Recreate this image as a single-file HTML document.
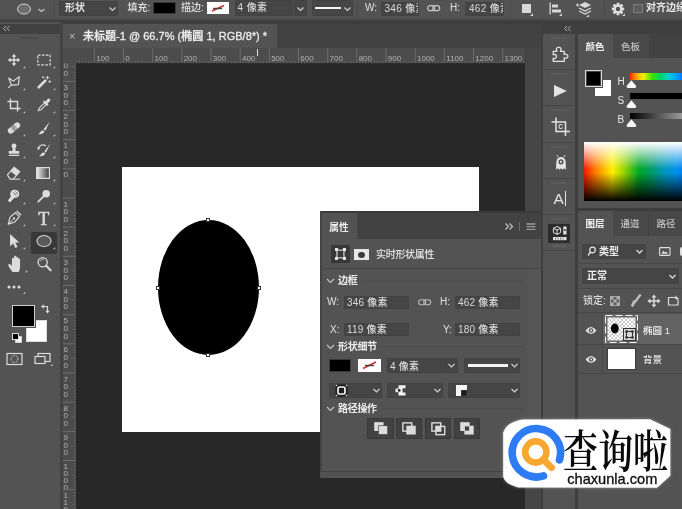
<!DOCTYPE html>
<html><head><meta charset="utf-8"><title>PS</title>
<style>
html,body{margin:0;padding:0;}
body{width:682px;height:509px;overflow:hidden;background:#535353;position:relative;font-family:"Liberation Sans","Noto Sans CJK SC",sans-serif;font-size:10px;color:#dcdcdc;}
.a{position:absolute;}
.t{position:absolute;white-space:nowrap;line-height:1;font-weight:500;}
.f{position:absolute;background:#454545;border:1px solid #424242;box-sizing:border-box;border-radius:1px;}
svg{position:absolute;overflow:visible;}
#w{position:absolute;left:0;top:0;width:682px;height:509px;overflow:hidden;background:#535353;filter:blur(0.6px);}
</style></head><body>
<div id="w">

<div class="a" style="left:62px;top:22px;width:480px;height:487px;background:#282828"></div>
<div class="a" style="left:62px;top:22px;width:480px;height:26px;background:#424242"></div>
<div class="a" style="left:63px;top:24px;width:214px;height:24px;background:#535353"></div>
<div class="t" style="left:69px;top:30.7px;font-size:11px;color:#bdbdbd">×</div>
<div class="t" style="left:83px;top:30.7px;font-size:11px;color:#eeeeee;font-weight:500;-webkit-text-stroke:0.3px #eee;letter-spacing:0.02px">未标题-1 @ 66.7% (椭圆 1, RGB/8*) *</div>
<div class="a" style="left:62.5px;top:48px;width:462.5px;height:15.3px;background:#4c4c4c"></div>
<div class="a" style="left:62.5px;top:48px;width:13.3px;height:461px;background:#4c4c4c"></div>
<svg class="a" style="left:0;top:0" width="682" height="509" viewBox="0 0 682 509"><defs><clipPath id="vr"><rect x="61" y="63.5" width="15" height="446"/></clipPath></defs><rect x="93.83" y="48" width="1" height="15" fill="#6c6c6c"/><text x="96.13" y="60.6" font-size="8" fill="#b2b2b2" font-family="Liberation Sans, sans-serif">100</text><rect x="123.00" y="48" width="1" height="15" fill="#6c6c6c"/><text x="125.30" y="60.6" font-size="8" fill="#b2b2b2" font-family="Liberation Sans, sans-serif">0</text><rect x="152.17" y="48" width="1" height="15" fill="#6c6c6c"/><text x="154.47" y="60.6" font-size="8" fill="#b2b2b2" font-family="Liberation Sans, sans-serif">100</text><rect x="181.34" y="48" width="1" height="15" fill="#6c6c6c"/><text x="183.64" y="60.6" font-size="8" fill="#b2b2b2" font-family="Liberation Sans, sans-serif">200</text><rect x="210.51" y="48" width="1" height="15" fill="#6c6c6c"/><text x="212.81" y="60.6" font-size="8" fill="#b2b2b2" font-family="Liberation Sans, sans-serif">300</text><rect x="239.68" y="48" width="1" height="15" fill="#6c6c6c"/><text x="241.98" y="60.6" font-size="8" fill="#b2b2b2" font-family="Liberation Sans, sans-serif">400</text><rect x="268.85" y="48" width="1" height="15" fill="#6c6c6c"/><text x="271.15" y="60.6" font-size="8" fill="#b2b2b2" font-family="Liberation Sans, sans-serif">500</text><rect x="298.02" y="48" width="1" height="15" fill="#6c6c6c"/><text x="300.32" y="60.6" font-size="8" fill="#b2b2b2" font-family="Liberation Sans, sans-serif">600</text><rect x="327.19" y="48" width="1" height="15" fill="#6c6c6c"/><text x="329.49" y="60.6" font-size="8" fill="#b2b2b2" font-family="Liberation Sans, sans-serif">700</text><rect x="356.36" y="48" width="1" height="15" fill="#6c6c6c"/><text x="358.66" y="60.6" font-size="8" fill="#b2b2b2" font-family="Liberation Sans, sans-serif">800</text><rect x="385.53" y="48" width="1" height="15" fill="#6c6c6c"/><text x="387.83" y="60.6" font-size="8" fill="#b2b2b2" font-family="Liberation Sans, sans-serif">900</text><rect x="414.70" y="48" width="1" height="15" fill="#6c6c6c"/><text x="417.00" y="60.6" font-size="8" fill="#b2b2b2" font-family="Liberation Sans, sans-serif">1000</text><rect x="443.87" y="48" width="1" height="15" fill="#6c6c6c"/><text x="446.17" y="60.6" font-size="8" fill="#b2b2b2" font-family="Liberation Sans, sans-serif">1100</text><rect x="473.04" y="48" width="1" height="15" fill="#6c6c6c"/><text x="475.34" y="60.6" font-size="8" fill="#b2b2b2" font-family="Liberation Sans, sans-serif">1200</text><rect x="502.21" y="48" width="1" height="15" fill="#6c6c6c"/><text x="504.51" y="60.6" font-size="8" fill="#b2b2b2" font-family="Liberation Sans, sans-serif">1300</text><rect x="76.33" y="61.3" width="1" height="2" fill="#626262"/><rect x="79.25" y="59.3" width="1" height="4" fill="#626262"/><rect x="82.16" y="61.3" width="1" height="2" fill="#626262"/><rect x="85.08" y="61.3" width="1" height="2" fill="#626262"/><rect x="88.00" y="61.3" width="1" height="2" fill="#626262"/><rect x="90.91" y="61.3" width="1" height="2" fill="#626262"/><rect x="96.75" y="61.3" width="1" height="2" fill="#626262"/><rect x="99.66" y="61.3" width="1" height="2" fill="#626262"/><rect x="102.58" y="61.3" width="1" height="2" fill="#626262"/><rect x="105.50" y="61.3" width="1" height="2" fill="#626262"/><rect x="108.41" y="59.3" width="1" height="4" fill="#626262"/><rect x="111.33" y="61.3" width="1" height="2" fill="#626262"/><rect x="114.25" y="61.3" width="1" height="2" fill="#626262"/><rect x="117.17" y="61.3" width="1" height="2" fill="#626262"/><rect x="120.08" y="61.3" width="1" height="2" fill="#626262"/><rect x="125.92" y="61.3" width="1" height="2" fill="#626262"/><rect x="128.83" y="61.3" width="1" height="2" fill="#626262"/><rect x="131.75" y="61.3" width="1" height="2" fill="#626262"/><rect x="134.67" y="61.3" width="1" height="2" fill="#626262"/><rect x="137.59" y="59.3" width="1" height="4" fill="#626262"/><rect x="140.50" y="61.3" width="1" height="2" fill="#626262"/><rect x="143.42" y="61.3" width="1" height="2" fill="#626262"/><rect x="146.34" y="61.3" width="1" height="2" fill="#626262"/><rect x="149.25" y="61.3" width="1" height="2" fill="#626262"/><rect x="155.09" y="61.3" width="1" height="2" fill="#626262"/><rect x="158.00" y="61.3" width="1" height="2" fill="#626262"/><rect x="160.92" y="61.3" width="1" height="2" fill="#626262"/><rect x="163.84" y="61.3" width="1" height="2" fill="#626262"/><rect x="166.75" y="59.3" width="1" height="4" fill="#626262"/><rect x="169.67" y="61.3" width="1" height="2" fill="#626262"/><rect x="172.59" y="61.3" width="1" height="2" fill="#626262"/><rect x="175.51" y="61.3" width="1" height="2" fill="#626262"/><rect x="178.42" y="61.3" width="1" height="2" fill="#626262"/><rect x="184.26" y="61.3" width="1" height="2" fill="#626262"/><rect x="187.17" y="61.3" width="1" height="2" fill="#626262"/><rect x="190.09" y="61.3" width="1" height="2" fill="#626262"/><rect x="193.01" y="61.3" width="1" height="2" fill="#626262"/><rect x="195.93" y="59.3" width="1" height="4" fill="#626262"/><rect x="198.84" y="61.3" width="1" height="2" fill="#626262"/><rect x="201.76" y="61.3" width="1" height="2" fill="#626262"/><rect x="204.68" y="61.3" width="1" height="2" fill="#626262"/><rect x="207.59" y="61.3" width="1" height="2" fill="#626262"/><rect x="213.43" y="61.3" width="1" height="2" fill="#626262"/><rect x="216.34" y="61.3" width="1" height="2" fill="#626262"/><rect x="219.26" y="61.3" width="1" height="2" fill="#626262"/><rect x="222.18" y="61.3" width="1" height="2" fill="#626262"/><rect x="225.09" y="59.3" width="1" height="4" fill="#626262"/><rect x="228.01" y="61.3" width="1" height="2" fill="#626262"/><rect x="230.93" y="61.3" width="1" height="2" fill="#626262"/><rect x="233.85" y="61.3" width="1" height="2" fill="#626262"/><rect x="236.76" y="61.3" width="1" height="2" fill="#626262"/><rect x="242.60" y="61.3" width="1" height="2" fill="#626262"/><rect x="245.51" y="61.3" width="1" height="2" fill="#626262"/><rect x="248.43" y="61.3" width="1" height="2" fill="#626262"/><rect x="251.35" y="61.3" width="1" height="2" fill="#626262"/><rect x="254.27" y="59.3" width="1" height="4" fill="#626262"/><rect x="257.18" y="61.3" width="1" height="2" fill="#626262"/><rect x="260.10" y="61.3" width="1" height="2" fill="#626262"/><rect x="263.02" y="61.3" width="1" height="2" fill="#626262"/><rect x="265.93" y="61.3" width="1" height="2" fill="#626262"/><rect x="271.77" y="61.3" width="1" height="2" fill="#626262"/><rect x="274.68" y="61.3" width="1" height="2" fill="#626262"/><rect x="277.60" y="61.3" width="1" height="2" fill="#626262"/><rect x="280.52" y="61.3" width="1" height="2" fill="#626262"/><rect x="283.44" y="59.3" width="1" height="4" fill="#626262"/><rect x="286.35" y="61.3" width="1" height="2" fill="#626262"/><rect x="289.27" y="61.3" width="1" height="2" fill="#626262"/><rect x="292.19" y="61.3" width="1" height="2" fill="#626262"/><rect x="295.10" y="61.3" width="1" height="2" fill="#626262"/><rect x="300.94" y="61.3" width="1" height="2" fill="#626262"/><rect x="303.85" y="61.3" width="1" height="2" fill="#626262"/><rect x="306.77" y="61.3" width="1" height="2" fill="#626262"/><rect x="309.69" y="61.3" width="1" height="2" fill="#626262"/><rect x="312.61" y="59.3" width="1" height="4" fill="#626262"/><rect x="315.52" y="61.3" width="1" height="2" fill="#626262"/><rect x="318.44" y="61.3" width="1" height="2" fill="#626262"/><rect x="321.36" y="61.3" width="1" height="2" fill="#626262"/><rect x="324.27" y="61.3" width="1" height="2" fill="#626262"/><rect x="330.11" y="61.3" width="1" height="2" fill="#626262"/><rect x="333.02" y="61.3" width="1" height="2" fill="#626262"/><rect x="335.94" y="61.3" width="1" height="2" fill="#626262"/><rect x="338.86" y="61.3" width="1" height="2" fill="#626262"/><rect x="341.77" y="59.3" width="1" height="4" fill="#626262"/><rect x="344.69" y="61.3" width="1" height="2" fill="#626262"/><rect x="347.61" y="61.3" width="1" height="2" fill="#626262"/><rect x="350.53" y="61.3" width="1" height="2" fill="#626262"/><rect x="353.44" y="61.3" width="1" height="2" fill="#626262"/><rect x="359.28" y="61.3" width="1" height="2" fill="#626262"/><rect x="362.19" y="61.3" width="1" height="2" fill="#626262"/><rect x="365.11" y="61.3" width="1" height="2" fill="#626262"/><rect x="368.03" y="61.3" width="1" height="2" fill="#626262"/><rect x="370.95" y="59.3" width="1" height="4" fill="#626262"/><rect x="373.86" y="61.3" width="1" height="2" fill="#626262"/><rect x="376.78" y="61.3" width="1" height="2" fill="#626262"/><rect x="379.70" y="61.3" width="1" height="2" fill="#626262"/><rect x="382.61" y="61.3" width="1" height="2" fill="#626262"/><rect x="388.45" y="61.3" width="1" height="2" fill="#626262"/><rect x="391.36" y="61.3" width="1" height="2" fill="#626262"/><rect x="394.28" y="61.3" width="1" height="2" fill="#626262"/><rect x="397.20" y="61.3" width="1" height="2" fill="#626262"/><rect x="400.12" y="59.3" width="1" height="4" fill="#626262"/><rect x="403.03" y="61.3" width="1" height="2" fill="#626262"/><rect x="405.95" y="61.3" width="1" height="2" fill="#626262"/><rect x="408.87" y="61.3" width="1" height="2" fill="#626262"/><rect x="411.78" y="61.3" width="1" height="2" fill="#626262"/><rect x="417.62" y="61.3" width="1" height="2" fill="#626262"/><rect x="420.53" y="61.3" width="1" height="2" fill="#626262"/><rect x="423.45" y="61.3" width="1" height="2" fill="#626262"/><rect x="426.37" y="61.3" width="1" height="2" fill="#626262"/><rect x="429.29" y="59.3" width="1" height="4" fill="#626262"/><rect x="432.20" y="61.3" width="1" height="2" fill="#626262"/><rect x="435.12" y="61.3" width="1" height="2" fill="#626262"/><rect x="438.04" y="61.3" width="1" height="2" fill="#626262"/><rect x="440.95" y="61.3" width="1" height="2" fill="#626262"/><rect x="446.79" y="61.3" width="1" height="2" fill="#626262"/><rect x="449.70" y="61.3" width="1" height="2" fill="#626262"/><rect x="452.62" y="61.3" width="1" height="2" fill="#626262"/><rect x="455.54" y="61.3" width="1" height="2" fill="#626262"/><rect x="458.46" y="59.3" width="1" height="4" fill="#626262"/><rect x="461.37" y="61.3" width="1" height="2" fill="#626262"/><rect x="464.29" y="61.3" width="1" height="2" fill="#626262"/><rect x="467.21" y="61.3" width="1" height="2" fill="#626262"/><rect x="470.12" y="61.3" width="1" height="2" fill="#626262"/><rect x="475.96" y="61.3" width="1" height="2" fill="#626262"/><rect x="478.87" y="61.3" width="1" height="2" fill="#626262"/><rect x="481.79" y="61.3" width="1" height="2" fill="#626262"/><rect x="484.71" y="61.3" width="1" height="2" fill="#626262"/><rect x="487.62" y="59.3" width="1" height="4" fill="#626262"/><rect x="490.54" y="61.3" width="1" height="2" fill="#626262"/><rect x="493.46" y="61.3" width="1" height="2" fill="#626262"/><rect x="496.38" y="61.3" width="1" height="2" fill="#626262"/><rect x="499.29" y="61.3" width="1" height="2" fill="#626262"/><rect x="505.13" y="61.3" width="1" height="2" fill="#626262"/><rect x="508.04" y="61.3" width="1" height="2" fill="#626262"/><rect x="510.96" y="61.3" width="1" height="2" fill="#626262"/><rect x="513.88" y="61.3" width="1" height="2" fill="#626262"/><rect x="516.80" y="59.3" width="1" height="4" fill="#626262"/><rect x="519.71" y="61.3" width="1" height="2" fill="#626262"/><rect x="522.63" y="61.3" width="1" height="2" fill="#626262"/><g clip-path="url(#vr)"><rect x="62.5" y="51.62" width="13.3" height="1" fill="#6c6c6c"/><text x="63.6" y="60.72" font-size="8" fill="#b2b2b2" font-family="Liberation Sans, sans-serif">4</text><text x="63.6" y="68.42" font-size="8" fill="#b2b2b2" font-family="Liberation Sans, sans-serif">0</text><text x="63.6" y="76.12" font-size="8" fill="#b2b2b2" font-family="Liberation Sans, sans-serif">0</text><rect x="62.5" y="80.79" width="13.3" height="1" fill="#6c6c6c"/><text x="63.6" y="89.89" font-size="8" fill="#b2b2b2" font-family="Liberation Sans, sans-serif">3</text><text x="63.6" y="97.59" font-size="8" fill="#b2b2b2" font-family="Liberation Sans, sans-serif">0</text><text x="63.6" y="105.29" font-size="8" fill="#b2b2b2" font-family="Liberation Sans, sans-serif">0</text><rect x="62.5" y="109.96" width="13.3" height="1" fill="#6c6c6c"/><text x="63.6" y="119.06" font-size="8" fill="#b2b2b2" font-family="Liberation Sans, sans-serif">2</text><text x="63.6" y="126.76" font-size="8" fill="#b2b2b2" font-family="Liberation Sans, sans-serif">0</text><text x="63.6" y="134.46" font-size="8" fill="#b2b2b2" font-family="Liberation Sans, sans-serif">0</text><rect x="62.5" y="139.13" width="13.3" height="1" fill="#6c6c6c"/><text x="63.6" y="148.23" font-size="8" fill="#b2b2b2" font-family="Liberation Sans, sans-serif">1</text><text x="63.6" y="155.93" font-size="8" fill="#b2b2b2" font-family="Liberation Sans, sans-serif">0</text><text x="63.6" y="163.63" font-size="8" fill="#b2b2b2" font-family="Liberation Sans, sans-serif">0</text><rect x="62.5" y="168.30" width="13.3" height="1" fill="#6c6c6c"/><text x="63.6" y="177.40" font-size="8" fill="#b2b2b2" font-family="Liberation Sans, sans-serif">0</text><rect x="62.5" y="197.47" width="13.3" height="1" fill="#6c6c6c"/><text x="63.6" y="206.57" font-size="8" fill="#b2b2b2" font-family="Liberation Sans, sans-serif">1</text><text x="63.6" y="214.27" font-size="8" fill="#b2b2b2" font-family="Liberation Sans, sans-serif">0</text><text x="63.6" y="221.97" font-size="8" fill="#b2b2b2" font-family="Liberation Sans, sans-serif">0</text><rect x="62.5" y="226.64" width="13.3" height="1" fill="#6c6c6c"/><text x="63.6" y="235.74" font-size="8" fill="#b2b2b2" font-family="Liberation Sans, sans-serif">2</text><text x="63.6" y="243.44" font-size="8" fill="#b2b2b2" font-family="Liberation Sans, sans-serif">0</text><text x="63.6" y="251.14" font-size="8" fill="#b2b2b2" font-family="Liberation Sans, sans-serif">0</text><rect x="62.5" y="255.81" width="13.3" height="1" fill="#6c6c6c"/><text x="63.6" y="264.91" font-size="8" fill="#b2b2b2" font-family="Liberation Sans, sans-serif">3</text><text x="63.6" y="272.61" font-size="8" fill="#b2b2b2" font-family="Liberation Sans, sans-serif">0</text><text x="63.6" y="280.31" font-size="8" fill="#b2b2b2" font-family="Liberation Sans, sans-serif">0</text><rect x="62.5" y="284.98" width="13.3" height="1" fill="#6c6c6c"/><text x="63.6" y="294.08" font-size="8" fill="#b2b2b2" font-family="Liberation Sans, sans-serif">4</text><text x="63.6" y="301.78" font-size="8" fill="#b2b2b2" font-family="Liberation Sans, sans-serif">0</text><text x="63.6" y="309.48" font-size="8" fill="#b2b2b2" font-family="Liberation Sans, sans-serif">0</text><rect x="62.5" y="314.15" width="13.3" height="1" fill="#6c6c6c"/><text x="63.6" y="323.25" font-size="8" fill="#b2b2b2" font-family="Liberation Sans, sans-serif">5</text><text x="63.6" y="330.95" font-size="8" fill="#b2b2b2" font-family="Liberation Sans, sans-serif">0</text><text x="63.6" y="338.65" font-size="8" fill="#b2b2b2" font-family="Liberation Sans, sans-serif">0</text><rect x="62.5" y="343.32" width="13.3" height="1" fill="#6c6c6c"/><text x="63.6" y="352.42" font-size="8" fill="#b2b2b2" font-family="Liberation Sans, sans-serif">6</text><text x="63.6" y="360.12" font-size="8" fill="#b2b2b2" font-family="Liberation Sans, sans-serif">0</text><text x="63.6" y="367.82" font-size="8" fill="#b2b2b2" font-family="Liberation Sans, sans-serif">0</text><rect x="62.5" y="372.49" width="13.3" height="1" fill="#6c6c6c"/><text x="63.6" y="381.59" font-size="8" fill="#b2b2b2" font-family="Liberation Sans, sans-serif">7</text><text x="63.6" y="389.29" font-size="8" fill="#b2b2b2" font-family="Liberation Sans, sans-serif">0</text><text x="63.6" y="396.99" font-size="8" fill="#b2b2b2" font-family="Liberation Sans, sans-serif">0</text><rect x="62.5" y="401.66" width="13.3" height="1" fill="#6c6c6c"/><text x="63.6" y="410.76" font-size="8" fill="#b2b2b2" font-family="Liberation Sans, sans-serif">8</text><text x="63.6" y="418.46" font-size="8" fill="#b2b2b2" font-family="Liberation Sans, sans-serif">0</text><text x="63.6" y="426.16" font-size="8" fill="#b2b2b2" font-family="Liberation Sans, sans-serif">0</text><rect x="62.5" y="430.83" width="13.3" height="1" fill="#6c6c6c"/><text x="63.6" y="439.93" font-size="8" fill="#b2b2b2" font-family="Liberation Sans, sans-serif">9</text><text x="63.6" y="447.63" font-size="8" fill="#b2b2b2" font-family="Liberation Sans, sans-serif">0</text><text x="63.6" y="455.33" font-size="8" fill="#b2b2b2" font-family="Liberation Sans, sans-serif">0</text><rect x="62.5" y="460.00" width="13.3" height="1" fill="#6c6c6c"/><text x="63.6" y="469.10" font-size="8" fill="#b2b2b2" font-family="Liberation Sans, sans-serif">1</text><text x="63.6" y="476.00" font-size="8" fill="#b2b2b2" font-family="Liberation Sans, sans-serif">0</text><text x="63.6" y="482.90" font-size="8" fill="#b2b2b2" font-family="Liberation Sans, sans-serif">0</text><text x="63.6" y="489.80" font-size="8" fill="#b2b2b2" font-family="Liberation Sans, sans-serif">0</text><rect x="62.5" y="489.17" width="13.3" height="1" fill="#6c6c6c"/><text x="63.6" y="498.27" font-size="8" fill="#b2b2b2" font-family="Liberation Sans, sans-serif">1</text><text x="63.6" y="505.17" font-size="8" fill="#b2b2b2" font-family="Liberation Sans, sans-serif">1</text><text x="63.6" y="512.07" font-size="8" fill="#b2b2b2" font-family="Liberation Sans, sans-serif">0</text><text x="63.6" y="518.97" font-size="8" fill="#b2b2b2" font-family="Liberation Sans, sans-serif">0</text><rect x="62.5" y="518.34" width="13.3" height="1" fill="#6c6c6c"/><text x="63.6" y="527.44" font-size="8" fill="#b2b2b2" font-family="Liberation Sans, sans-serif">1</text><text x="63.6" y="534.34" font-size="8" fill="#b2b2b2" font-family="Liberation Sans, sans-serif">2</text><text x="63.6" y="541.24" font-size="8" fill="#b2b2b2" font-family="Liberation Sans, sans-serif">0</text><text x="63.6" y="548.14" font-size="8" fill="#b2b2b2" font-family="Liberation Sans, sans-serif">0</text><rect x="73.8" y="54.54" width="2" height="1" fill="#626262"/><rect x="73.8" y="57.45" width="2" height="1" fill="#626262"/><rect x="73.8" y="60.37" width="2" height="1" fill="#626262"/><rect x="73.8" y="63.29" width="2" height="1" fill="#626262"/><rect x="71.8" y="66.21" width="4" height="1" fill="#626262"/><rect x="73.8" y="69.12" width="2" height="1" fill="#626262"/><rect x="73.8" y="72.04" width="2" height="1" fill="#626262"/><rect x="73.8" y="74.96" width="2" height="1" fill="#626262"/><rect x="73.8" y="77.87" width="2" height="1" fill="#626262"/><rect x="73.8" y="83.71" width="2" height="1" fill="#626262"/><rect x="73.8" y="86.62" width="2" height="1" fill="#626262"/><rect x="73.8" y="89.54" width="2" height="1" fill="#626262"/><rect x="73.8" y="92.46" width="2" height="1" fill="#626262"/><rect x="71.8" y="95.38" width="4" height="1" fill="#626262"/><rect x="73.8" y="98.29" width="2" height="1" fill="#626262"/><rect x="73.8" y="101.21" width="2" height="1" fill="#626262"/><rect x="73.8" y="104.13" width="2" height="1" fill="#626262"/><rect x="73.8" y="107.04" width="2" height="1" fill="#626262"/><rect x="73.8" y="112.88" width="2" height="1" fill="#626262"/><rect x="73.8" y="115.79" width="2" height="1" fill="#626262"/><rect x="73.8" y="118.71" width="2" height="1" fill="#626262"/><rect x="73.8" y="121.63" width="2" height="1" fill="#626262"/><rect x="71.8" y="124.55" width="4" height="1" fill="#626262"/><rect x="73.8" y="127.46" width="2" height="1" fill="#626262"/><rect x="73.8" y="130.38" width="2" height="1" fill="#626262"/><rect x="73.8" y="133.30" width="2" height="1" fill="#626262"/><rect x="73.8" y="136.21" width="2" height="1" fill="#626262"/><rect x="73.8" y="142.05" width="2" height="1" fill="#626262"/><rect x="73.8" y="144.96" width="2" height="1" fill="#626262"/><rect x="73.8" y="147.88" width="2" height="1" fill="#626262"/><rect x="73.8" y="150.80" width="2" height="1" fill="#626262"/><rect x="71.8" y="153.72" width="4" height="1" fill="#626262"/><rect x="73.8" y="156.63" width="2" height="1" fill="#626262"/><rect x="73.8" y="159.55" width="2" height="1" fill="#626262"/><rect x="73.8" y="162.47" width="2" height="1" fill="#626262"/><rect x="73.8" y="165.38" width="2" height="1" fill="#626262"/><rect x="73.8" y="171.22" width="2" height="1" fill="#626262"/><rect x="73.8" y="174.13" width="2" height="1" fill="#626262"/><rect x="73.8" y="177.05" width="2" height="1" fill="#626262"/><rect x="73.8" y="179.97" width="2" height="1" fill="#626262"/><rect x="71.8" y="182.89" width="4" height="1" fill="#626262"/><rect x="73.8" y="185.80" width="2" height="1" fill="#626262"/><rect x="73.8" y="188.72" width="2" height="1" fill="#626262"/><rect x="73.8" y="191.64" width="2" height="1" fill="#626262"/><rect x="73.8" y="194.55" width="2" height="1" fill="#626262"/><rect x="73.8" y="200.39" width="2" height="1" fill="#626262"/><rect x="73.8" y="203.30" width="2" height="1" fill="#626262"/><rect x="73.8" y="206.22" width="2" height="1" fill="#626262"/><rect x="73.8" y="209.14" width="2" height="1" fill="#626262"/><rect x="71.8" y="212.06" width="4" height="1" fill="#626262"/><rect x="73.8" y="214.97" width="2" height="1" fill="#626262"/><rect x="73.8" y="217.89" width="2" height="1" fill="#626262"/><rect x="73.8" y="220.81" width="2" height="1" fill="#626262"/><rect x="73.8" y="223.72" width="2" height="1" fill="#626262"/><rect x="73.8" y="229.56" width="2" height="1" fill="#626262"/><rect x="73.8" y="232.47" width="2" height="1" fill="#626262"/><rect x="73.8" y="235.39" width="2" height="1" fill="#626262"/><rect x="73.8" y="238.31" width="2" height="1" fill="#626262"/><rect x="71.8" y="241.23" width="4" height="1" fill="#626262"/><rect x="73.8" y="244.14" width="2" height="1" fill="#626262"/><rect x="73.8" y="247.06" width="2" height="1" fill="#626262"/><rect x="73.8" y="249.98" width="2" height="1" fill="#626262"/><rect x="73.8" y="252.89" width="2" height="1" fill="#626262"/><rect x="73.8" y="258.73" width="2" height="1" fill="#626262"/><rect x="73.8" y="261.64" width="2" height="1" fill="#626262"/><rect x="73.8" y="264.56" width="2" height="1" fill="#626262"/><rect x="73.8" y="267.48" width="2" height="1" fill="#626262"/><rect x="71.8" y="270.39" width="4" height="1" fill="#626262"/><rect x="73.8" y="273.31" width="2" height="1" fill="#626262"/><rect x="73.8" y="276.23" width="2" height="1" fill="#626262"/><rect x="73.8" y="279.15" width="2" height="1" fill="#626262"/><rect x="73.8" y="282.06" width="2" height="1" fill="#626262"/><rect x="73.8" y="287.90" width="2" height="1" fill="#626262"/><rect x="73.8" y="290.81" width="2" height="1" fill="#626262"/><rect x="73.8" y="293.73" width="2" height="1" fill="#626262"/><rect x="73.8" y="296.65" width="2" height="1" fill="#626262"/><rect x="71.8" y="299.57" width="4" height="1" fill="#626262"/><rect x="73.8" y="302.48" width="2" height="1" fill="#626262"/><rect x="73.8" y="305.40" width="2" height="1" fill="#626262"/><rect x="73.8" y="308.32" width="2" height="1" fill="#626262"/><rect x="73.8" y="311.23" width="2" height="1" fill="#626262"/><rect x="73.8" y="317.07" width="2" height="1" fill="#626262"/><rect x="73.8" y="319.98" width="2" height="1" fill="#626262"/><rect x="73.8" y="322.90" width="2" height="1" fill="#626262"/><rect x="73.8" y="325.82" width="2" height="1" fill="#626262"/><rect x="71.8" y="328.74" width="4" height="1" fill="#626262"/><rect x="73.8" y="331.65" width="2" height="1" fill="#626262"/><rect x="73.8" y="334.57" width="2" height="1" fill="#626262"/><rect x="73.8" y="337.49" width="2" height="1" fill="#626262"/><rect x="73.8" y="340.40" width="2" height="1" fill="#626262"/><rect x="73.8" y="346.24" width="2" height="1" fill="#626262"/><rect x="73.8" y="349.15" width="2" height="1" fill="#626262"/><rect x="73.8" y="352.07" width="2" height="1" fill="#626262"/><rect x="73.8" y="354.99" width="2" height="1" fill="#626262"/><rect x="71.8" y="357.91" width="4" height="1" fill="#626262"/><rect x="73.8" y="360.82" width="2" height="1" fill="#626262"/><rect x="73.8" y="363.74" width="2" height="1" fill="#626262"/><rect x="73.8" y="366.66" width="2" height="1" fill="#626262"/><rect x="73.8" y="369.57" width="2" height="1" fill="#626262"/><rect x="73.8" y="375.41" width="2" height="1" fill="#626262"/><rect x="73.8" y="378.32" width="2" height="1" fill="#626262"/><rect x="73.8" y="381.24" width="2" height="1" fill="#626262"/><rect x="73.8" y="384.16" width="2" height="1" fill="#626262"/><rect x="71.8" y="387.08" width="4" height="1" fill="#626262"/><rect x="73.8" y="389.99" width="2" height="1" fill="#626262"/><rect x="73.8" y="392.91" width="2" height="1" fill="#626262"/><rect x="73.8" y="395.83" width="2" height="1" fill="#626262"/><rect x="73.8" y="398.74" width="2" height="1" fill="#626262"/><rect x="73.8" y="404.58" width="2" height="1" fill="#626262"/><rect x="73.8" y="407.49" width="2" height="1" fill="#626262"/><rect x="73.8" y="410.41" width="2" height="1" fill="#626262"/><rect x="73.8" y="413.33" width="2" height="1" fill="#626262"/><rect x="71.8" y="416.25" width="4" height="1" fill="#626262"/><rect x="73.8" y="419.16" width="2" height="1" fill="#626262"/><rect x="73.8" y="422.08" width="2" height="1" fill="#626262"/><rect x="73.8" y="425.00" width="2" height="1" fill="#626262"/><rect x="73.8" y="427.91" width="2" height="1" fill="#626262"/><rect x="73.8" y="433.75" width="2" height="1" fill="#626262"/><rect x="73.8" y="436.66" width="2" height="1" fill="#626262"/><rect x="73.8" y="439.58" width="2" height="1" fill="#626262"/><rect x="73.8" y="442.50" width="2" height="1" fill="#626262"/><rect x="71.8" y="445.42" width="4" height="1" fill="#626262"/><rect x="73.8" y="448.33" width="2" height="1" fill="#626262"/><rect x="73.8" y="451.25" width="2" height="1" fill="#626262"/><rect x="73.8" y="454.17" width="2" height="1" fill="#626262"/><rect x="73.8" y="457.08" width="2" height="1" fill="#626262"/><rect x="73.8" y="462.92" width="2" height="1" fill="#626262"/><rect x="73.8" y="465.83" width="2" height="1" fill="#626262"/><rect x="73.8" y="468.75" width="2" height="1" fill="#626262"/><rect x="73.8" y="471.67" width="2" height="1" fill="#626262"/><rect x="71.8" y="474.59" width="4" height="1" fill="#626262"/><rect x="73.8" y="477.50" width="2" height="1" fill="#626262"/><rect x="73.8" y="480.42" width="2" height="1" fill="#626262"/><rect x="73.8" y="483.34" width="2" height="1" fill="#626262"/><rect x="73.8" y="486.25" width="2" height="1" fill="#626262"/><rect x="73.8" y="492.09" width="2" height="1" fill="#626262"/><rect x="73.8" y="495.00" width="2" height="1" fill="#626262"/><rect x="73.8" y="497.92" width="2" height="1" fill="#626262"/><rect x="73.8" y="500.84" width="2" height="1" fill="#626262"/><rect x="71.8" y="503.76" width="4" height="1" fill="#626262"/><rect x="73.8" y="506.67" width="2" height="1" fill="#626262"/><rect x="73.8" y="509.59" width="2" height="1" fill="#626262"/><rect x="73.8" y="512.51" width="2" height="1" fill="#626262"/><rect x="73.8" y="515.42" width="2" height="1" fill="#626262"/><rect x="73.8" y="521.26" width="2" height="1" fill="#626262"/><rect x="73.8" y="524.17" width="2" height="1" fill="#626262"/><rect x="73.8" y="527.09" width="2" height="1" fill="#626262"/><rect x="73.8" y="530.01" width="2" height="1" fill="#626262"/><rect x="71.8" y="532.92" width="4" height="1" fill="#626262"/><rect x="73.8" y="535.84" width="2" height="1" fill="#626262"/><rect x="73.8" y="538.76" width="2" height="1" fill="#626262"/><rect x="73.8" y="541.68" width="2" height="1" fill="#626262"/><rect x="73.8" y="544.59" width="2" height="1" fill="#626262"/></g></svg>
<div class="a" style="left:62.5px;top:48px;width:13.3px;height:15.3px;background:#4c4c4c"></div>
<div class="a" style="left:257px;top:49px;width:1px;height:7px;background:#e0e0e0"></div>
<div class="a" style="left:122px;top:167px;width:357px;height:265px;background:#fff"></div>
<div class="a" style="left:157.5px;top:219.5px;width:101px;height:135.5px;background:#000;border-radius:50%"></div>
<div class="a" style="left:206px;top:217.5px;width:2px;height:2px;background:#fff;border:1px solid #333"></div>
<div class="a" style="left:206px;top:353px;width:2px;height:2px;background:#fff;border:1px solid #333"></div>
<div class="a" style="left:155.5px;top:285.5px;width:2px;height:2px;background:#fff;border:1px solid #333"></div>
<div class="a" style="left:256.5px;top:285.5px;width:2px;height:2px;background:#fff;border:1px solid #333"></div>
<div class="a" style="left:0;top:0;width:682px;height:20px;background:#535353"></div>
<div class="a" style="left:0;top:17.5px;width:682px;height:6.5px;background:linear-gradient(180deg,#525252 0%,#484848 28%,#3d3d3d 58%,#3a3a3a 82%,#3e3e3e 100%)"></div>
<svg style="left:0;top:0" width="60" height="20"><ellipse cx="24" cy="9" rx="6.5" ry="5" fill="#6e6e6e" stroke="#d0d0d0" stroke-width="1"/><path d="M38.5 9 L41.5 11.5 L44.5 9" fill="none" stroke="#c8c8c8" stroke-width="1.2"/></svg>
<div class="a" style="left:54px;top:1px;width:1px;height:16px;background:#494949"></div>
<div class="f" style="left:59px;top:0.5px;width:59px;height:15.5px"></div>
<div class="t" style="left:65px;top:3.4px;font-size:10px;color:#e4e4e4;font-weight:bold">形状</div>
<svg style="left:108px;top:4.5px" width="10" height="8"><path d="M1.5 2.5 L4.5 5.5 L7.5 2.5" fill="none" stroke="#d0d0d0" stroke-width="1.2"/></svg>
<div class="t" style="left:127.5px;top:3.4px;font-size:10px;color:#e0e0e0">填充:</div>
<div class="a" style="left:153px;top:1.5px;width:23px;height:12.5px;background:#000;border:1px solid #3a3a3a;box-sizing:border-box"></div>
<div class="t" style="left:181px;top:3.4px;font-size:10px;color:#e0e0e0">描边:</div>
<div class="a" style="left:207px;top:1.8px;width:21.5px;height:12px;background:#fff"></div>
<svg style="left:207px;top:1.5px" width="22" height="13"><path d="M5 9 L17 3.5" stroke="#d03030" stroke-width="1.6"/><path d="M6 6.5 H15" stroke="#444" stroke-width="1.4"/></svg>
<div class="f" style="left:235px;top:0px;width:58px;height:15.5px"></div>
<div class="t" style="left:237.5px;top:3.4px;font-size:10px;color:#d8d8d8;letter-spacing:0.4px">4 像素</div>
<div class="f" style="left:294px;top:0px;width:13px;height:15.5px"></div>
<svg style="left:296px;top:4.5px" width="10" height="8"><path d="M1.5 2.5 L4.5 5.5 L7.5 2.5" fill="none" stroke="#d0d0d0" stroke-width="1.2"/></svg>
<div class="f" style="left:312px;top:0px;width:41px;height:15.5px"></div>
<div class="a" style="left:315px;top:6.7px;width:26px;height:2.6px;background:#f4f4f4"></div>
<svg style="left:343px;top:4.5px" width="10" height="8"><path d="M1.5 2.5 L4.5 5.5 L7.5 2.5" fill="none" stroke="#d0d0d0" stroke-width="1.2"/></svg>
<div class="a" style="left:357px;top:1px;width:1px;height:16px;background:#494949"></div>
<div class="t" style="left:365px;top:3.4px;font-size:10px;color:#e0e0e0">W:</div>
<div class="f" style="left:380.5px;top:2px;width:38px;height:13.5px;overflow:hidden"><div class="t" style="left:3px;top:0.6px;font-size:10px;color:#d8d8d8;letter-spacing:0.3px">346 像素</div></div>
<svg style="left:427px;top:4px" width="14" height="9"><rect x="0.7" y="1.7" width="7" height="5" rx="2.5" fill="none" stroke="#c8c8c8" stroke-width="1.2"/><rect x="5.7" y="1.7" width="7" height="5" rx="2.5" fill="none" stroke="#c8c8c8" stroke-width="1.2"/></svg>
<div class="t" style="left:450px;top:3.4px;font-size:10px;color:#e0e0e0">H:</div>
<div class="f" style="left:465px;top:2px;width:39px;height:13.5px;overflow:hidden"><div class="t" style="left:3px;top:0.6px;font-size:10px;color:#d8d8d8;letter-spacing:0.3px">462 像素</div></div>
<div class="a" style="left:510px;top:1px;width:1px;height:16px;background:#4d4d4d"></div>
<div class="a" style="left:522px;top:4px;width:9px;height:9px;background:#d8d8d8"></div>
<svg style="left:530px;top:13px" width="4" height="4"><path d="M0 3 H3 V0 Z" fill="#d0d0d0"/></svg>
<svg style="left:549px;top:2px" width="14" height="14"><rect x="0.5" y="0.5" width="1.3" height="12" fill="#d8d8d8"/><rect x="3" y="2.5" width="6" height="3" fill="#d8d8d8"/><rect x="3" y="7.5" width="9" height="3" fill="#d8d8d8"/><path d="M10 14 H13 V11 Z" fill="#d0d0d0"/></svg>
<svg style="left:576px;top:1px" width="18" height="17"><path d="M9 1 L15 4 L9 7 L3 4 Z" fill="#d8d8d8"/><path d="M3 7 L9 10 L15 7" fill="none" stroke="#d8d8d8" stroke-width="1.3"/><path d="M3 10 L9 13 L15 10" fill="none" stroke="#d8d8d8" stroke-width="1.3"/><path d="M0 4 h3 M1.5 2.5 v3" stroke="#d8d8d8" stroke-width="1"/><path d="M10 16 H13 V13.5 Z" fill="#d0d0d0"/></svg>
<div class="a" style="left:604px;top:1px;width:1px;height:16px;background:#494949"></div>
<svg style="left:611px;top:2px" width="14" height="14" viewBox="-7 -7 14 14"><g fill="#e0e0e0"><rect x="-1.4" y="-6.2" width="2.8" height="3" transform="rotate(0)"/><rect x="-1.4" y="-6.2" width="2.8" height="3" transform="rotate(45)"/><rect x="-1.4" y="-6.2" width="2.8" height="3" transform="rotate(90)"/><rect x="-1.4" y="-6.2" width="2.8" height="3" transform="rotate(135)"/><rect x="-1.4" y="-6.2" width="2.8" height="3" transform="rotate(180)"/><rect x="-1.4" y="-6.2" width="2.8" height="3" transform="rotate(225)"/><rect x="-1.4" y="-6.2" width="2.8" height="3" transform="rotate(270)"/><rect x="-1.4" y="-6.2" width="2.8" height="3" transform="rotate(315)"/></g><circle r="3.3" fill="none" stroke="#e0e0e0" stroke-width="2.2"/><path d="M4 7 H7 V4.5 Z" fill="#d0d0d0"/></svg>
<div class="a" style="left:633px;top:3.5px;width:9.5px;height:9.5px;background:#5c5c5c;border:1px solid #7c7c7c;box-sizing:border-box"></div>
<div class="t" style="left:646px;top:3.4px;font-size:10px;color:#e8e8e8;font-weight:bold">对齐边缘</div>
<div class="a" style="left:0;top:22px;width:60px;height:487px;background:#535353"></div>
<div class="a" style="left:60px;top:22px;width:2.5px;height:487px;background:#434343"></div>
<div class="a" style="left:0;top:24px;width:60px;height:10px;background:#404040"></div>
<svg style="left:2px;top:25px" width="10" height="8"><path d="M4 1 L1.5 3.5 L4 6 M7.5 1 L5 3.5 L7.5 6" fill="none" stroke="#b0b0b0" stroke-width="1"/></svg>
<div class="a" style="left:20px;top:37px;width:18px;height:2px;background:#4b4b4b"></div>
<div class="a" style="left:30.5px;top:231.5px;width:26.5px;height:22px;background:#383838;border-radius:2px"></div>
<svg style="left:4px;top:49.8px" width="20" height="20" viewBox="-10 -10 20 20"><g transform="scale(0.88)"><path d="M0 -7 L2.6 -3.8 H0.8 V-0.8 H3.8 V-2.6 L7 0 L3.8 2.6 V0.8 H0.8 V3.8 H2.6 L0 7 L-2.6 3.8 H-0.8 V0.8 H-3.8 V2.6 L-7 0 L-3.8 -2.6 V-0.8 H-0.8 V-3.8 H-2.6 Z" fill="#dcdcdc"/></g><path d="M9 8.2 h2.2 v-2.2 Z" fill="#c0c0c0"/></svg>
<svg style="left:33.5px;top:49.8px" width="20" height="20" viewBox="-10 -10 20 20"><g transform="scale(0.88)"><rect x="-7" y="-5.5" width="14" height="11" fill="none" stroke="#dcdcdc" stroke-width="1.3" stroke-dasharray="3 1.6"/></g><path d="M9 8.2 h2.2 v-2.2 Z" fill="#c0c0c0"/></svg>
<svg style="left:4px;top:72.44999999999999px" width="20" height="20" viewBox="-10 -10 20 20"><g transform="scale(0.88)"><path d="M-6 -4.5 L-1 -1 L6 -6 L5 3 L-3 3.5 Z" fill="none" stroke="#dcdcdc" stroke-width="1.3" stroke-linejoin="round"/><path d="M-3 3.5 L-6.5 6.5" stroke="#dcdcdc" stroke-width="1.3"/></g><path d="M9 8.2 h2.2 v-2.2 Z" fill="#c0c0c0"/></svg>
<svg style="left:33.5px;top:72.44999999999999px" width="20" height="20" viewBox="-10 -10 20 20"><g transform="scale(0.88)"><path d="M-6 6 L1.5 -1.5" stroke="#dcdcdc" stroke-width="3" stroke-linecap="round"/><path d="M4 -7 v4 M2 -5 h4 M6.5 -2 v3 M5 -0.5 h3 M-1 -6.5 v2.4 M-2.2 -5.3 h2.4" stroke="#dcdcdc" stroke-width="1"/></g><path d="M9 8.2 h2.2 v-2.2 Z" fill="#c0c0c0"/></svg>
<svg style="left:4px;top:95.1px" width="20" height="20" viewBox="-10 -10 20 20"><g transform="scale(0.88)"><path d="M-4 -7.5 V4 H7.5 M-7.5 -4 H4 V7.5" fill="none" stroke="#dcdcdc" stroke-width="1.6"/></g><path d="M9 8.2 h2.2 v-2.2 Z" fill="#c0c0c0"/></svg>
<svg style="left:33.5px;top:95.1px" width="20" height="20" viewBox="-10 -10 20 20"><g transform="scale(0.88)"><path d="M-6.5 6.5 L-5.5 3.5 L1 -3 L3 -1 L-3.5 5.5 Z" fill="none" stroke="#dcdcdc" stroke-width="1.2" stroke-linejoin="round"/><path d="M-0.5 -4.5 L4.5 0.5" stroke="#dcdcdc" stroke-width="2"/><path d="M2 -2 L5.5 -5.5" stroke="#dcdcdc" stroke-width="3.4" stroke-linecap="round"/></g><path d="M9 8.2 h2.2 v-2.2 Z" fill="#c0c0c0"/></svg>
<svg style="left:4px;top:117.74999999999999px" width="20" height="20" viewBox="-10 -10 20 20"><g transform="scale(0.88)"><g transform="rotate(-40)"><rect x="-8" y="-3.4" width="16" height="6.8" rx="3.2" fill="#dcdcdc"/><rect x="-2.6" y="-3.4" width="5.2" height="6.8" fill="#535353" opacity="0.55"/><circle cx="-1.2" cy="-1.2" r="0.6" fill="#dcdcdc"/><circle cx="1.2" cy="1.2" r="0.6" fill="#dcdcdc"/><circle cx="1.2" cy="-1.2" r="0.6" fill="#dcdcdc"/><circle cx="-1.2" cy="1.2" r="0.6" fill="#dcdcdc"/></g></g><path d="M9 8.2 h2.2 v-2.2 Z" fill="#c0c0c0"/></svg>
<svg style="left:33.5px;top:117.74999999999999px" width="20" height="20" viewBox="-10 -10 20 20"><g transform="scale(0.88)"><path d="M6.5 -7 L-0.5 1.5 L1.5 3 Z" fill="#dcdcdc"/><path d="M-1.5 2.5 L0.5 4 C-0.5 6.5 -3.5 7.5 -6.5 6.8 C-4.5 5.8 -4.2 3.2 -1.5 2.5 Z" fill="#dcdcdc"/></g><path d="M9 8.2 h2.2 v-2.2 Z" fill="#c0c0c0"/></svg>
<svg style="left:4px;top:140.39999999999998px" width="20" height="20" viewBox="-10 -10 20 20"><g transform="scale(0.88)"><circle cx="0" cy="-4.5" r="2.8" fill="#dcdcdc"/><path d="M-1.3 -3 L-2 1 H2 L1.3 -3 Z" fill="#dcdcdc"/><rect x="-6" y="1" width="12" height="3.2" rx="0.8" fill="#dcdcdc"/><rect x="-6" y="5.4" width="12" height="1.4" fill="#dcdcdc"/></g><path d="M9 8.2 h2.2 v-2.2 Z" fill="#c0c0c0"/></svg>
<svg style="left:33.5px;top:140.39999999999998px" width="20" height="20" viewBox="-10 -10 20 20"><g transform="scale(0.88)"><path d="M7 -7 L0.5 1.5 L2.2 3 Z" fill="#dcdcdc"/><path d="M-0.5 2.5 L1.5 4 C0.5 6.5 -2.5 7.5 -5.5 6.8 C-3.5 5.8 -3.2 3.2 -0.5 2.5 Z" fill="#dcdcdc"/><path d="M-6.5 -1.5 C-5.5 -6 -1 -7 2 -4.5" fill="none" stroke="#dcdcdc" stroke-width="1.3"/><path d="M-8 -3 L-6.3 0.2 L-4 -2.5 Z" fill="#dcdcdc"/></g><path d="M9 8.2 h2.2 v-2.2 Z" fill="#c0c0c0"/></svg>
<svg style="left:4px;top:163.05px" width="20" height="20" viewBox="-10 -10 20 20"><g transform="scale(0.88)"><path d="M-7.5 2 L0 -6.5 L6.5 -1.5 L-1 7 H-4.5 Z" fill="none" stroke="#dcdcdc" stroke-width="1.3" stroke-linejoin="round"/><path d="M0 -6.5 L6.5 -1.5 L2.5 3 L-4 -2 Z" fill="#dcdcdc"/><path d="M-1 7 H7" stroke="#dcdcdc" stroke-width="1.2"/></g><path d="M9 8.2 h2.2 v-2.2 Z" fill="#c0c0c0"/></svg>
<svg style="left:35.7px;top:167.05px" width="14" height="12"><defs><linearGradient id="tg" x1="0" x2="1"><stop offset="0" stop-color="#f0f0f0"/><stop offset="1" stop-color="#3a3a3a"/></linearGradient></defs><rect x="0.6" y="0.6" width="12.8" height="10.8" fill="url(#tg)" stroke="#dcdcdc" stroke-width="1.2"/></svg>
<svg style="left:33.5px;top:163.05px" width="20" height="20" viewBox="-10 -10 20 20"><g transform="scale(0.88)"></g><path d="M9 8.2 h2.2 v-2.2 Z" fill="#c0c0c0"/></svg>
<svg style="left:4px;top:185.7px" width="20" height="20" viewBox="-10 -10 20 20"><g transform="scale(0.88)"><path d="M-2 -6.5 C1 -8 6 -6.5 6 -2.5 C6 1 3.5 2.5 0.5 2 L-4.5 7.5 L-7 5 L-3.5 0.5 C-5 -2 -4.5 -5 -2 -6.5 Z" fill="#dcdcdc"/><path d="M-1 -4 L3 -0.5 M1.5 -5 L4.5 -2.3" stroke="#535353" stroke-width="0.9"/></g><path d="M9 8.2 h2.2 v-2.2 Z" fill="#c0c0c0"/></svg>
<svg style="left:33.5px;top:185.7px" width="20" height="20" viewBox="-10 -10 20 20"><g transform="scale(0.88)"><circle cx="2.5" cy="-2.5" r="4.3" fill="#dcdcdc"/><path d="M-0.5 0.5 L-6.5 6.5" stroke="#dcdcdc" stroke-width="2" stroke-linecap="round"/></g><path d="M9 8.2 h2.2 v-2.2 Z" fill="#c0c0c0"/></svg>
<svg style="left:4px;top:208.34999999999997px" width="20" height="20" viewBox="-10 -10 20 20"><g transform="scale(0.88)"><path d="M-6.5 7 L-4.5 -1 L1.5 -6 L6 -1.5 L1 4.5 Z" fill="none" stroke="#dcdcdc" stroke-width="1.3" stroke-linejoin="round"/><path d="M-6.5 7 L-1 1.5" stroke="#dcdcdc" stroke-width="1.1"/><circle cx="0" cy="0.5" r="1.3" fill="#dcdcdc"/><path d="M3 -8 L8 -3" stroke="#dcdcdc" stroke-width="1.6"/></g><path d="M9 8.2 h2.2 v-2.2 Z" fill="#c0c0c0"/></svg>
<div class="t" style="left:38.2px;top:210.14999999999998px;font-family:'Liberation Serif',serif;font-weight:normal;-webkit-text-stroke:0.5px #dcdcdc;font-size:18px;color:#dcdcdc">T</div>
<svg style="left:33.5px;top:208.34999999999997px" width="20" height="20" viewBox="-10 -10 20 20"><g transform="scale(0.88)"></g><path d="M9 8.2 h2.2 v-2.2 Z" fill="#c0c0c0"/></svg>
<svg style="left:4px;top:231.0px" width="20" height="20" viewBox="-10 -10 20 20"><g transform="scale(0.88)"><path d="M-4.5 -8 V6 L-1 2.8 L1.5 8 L4 6.8 L1.5 1.8 H6 Z" fill="#dcdcdc"/></g><path d="M9 8.2 h2.2 v-2.2 Z" fill="#c0c0c0"/></svg>
<svg style="left:33.5px;top:231.0px" width="20" height="20" viewBox="-10 -10 20 20"><g transform="scale(0.88)"><ellipse cx="0" cy="0" rx="8" ry="6.3" fill="#5a5a5a" stroke="#dcdcdc" stroke-width="1.2"/></g><path d="M9 8.2 h2.2 v-2.2 Z" fill="#c0c0c0"/></svg>
<svg style="left:5.5px;top:254.14999999999998px" width="20" height="20" viewBox="-10 -10 20 20"><g transform="scale(0.88)"><path transform="scale(1.15)" d="M-3.5 8 C-5 5 -8 2.5 -7.5 0.5 C-6.5 -0.5 -5 0.5 -4 2 V-5 C-4 -6.5 -2 -6.5 -2 -5 V-7 C-2 -8.5 0 -8.5 0 -7 V-6 C0 -7.5 2 -7.5 2 -6 V-4.5 C2 -6 4 -6 4 -4.5 V3 C4 5 3.5 6.5 2.5 8 Z" fill="#dcdcdc"/></g><path d="M9 8.2 h2.2 v-2.2 Z" fill="#c0c0c0"/></svg>
<svg style="left:33.5px;top:253.64999999999998px" width="20" height="20" viewBox="-10 -10 20 20"><g transform="scale(0.88)"><circle cx="-1.5" cy="-2" r="5.2" fill="none" stroke="#dcdcdc" stroke-width="1.5"/><path d="M2.5 2 L7.5 7" stroke="#dcdcdc" stroke-width="2.4" stroke-linecap="round"/><path d="M-4.5 -3 C-4 -5 -1.5 -5.8 0 -5" fill="none" stroke="#dcdcdc" stroke-width="0.9"/></g></svg>
<svg style="left:6px;top:284px" width="22" height="12"><circle cx="3" cy="3" r="1.5" fill="#dcdcdc"/><circle cx="8" cy="3" r="1.5" fill="#dcdcdc"/><circle cx="13" cy="3" r="1.5" fill="#dcdcdc"/><path d="M17 10 h2.2 v-2.2 Z" fill="#c0c0c0"/></svg>
<div class="a" style="left:26px;top:320px;width:21px;height:22px;background:#fff;border:1px solid #dcdcdc;box-sizing:border-box"></div>
<div class="a" style="left:12px;top:305px;width:23px;height:22px;background:#000;border:1px solid #cfcfcf;box-sizing:border-box;box-shadow:0 0 0 1px #535353"></div>
<svg style="left:40px;top:304px" width="12" height="12"><path d="M3 2.5 H7.5 V7" fill="none" stroke="#dcdcdc" stroke-width="1.2"/><path d="M1 2.5 L3.8 0.3 V4.7 Z M7.5 9.5 L5.3 6.7 H9.7 Z" fill="#dcdcdc"/></svg>
<svg style="left:12px;top:333px" width="12" height="12"><rect x="3.5" y="3.5" width="6" height="6" fill="#fff" stroke="#dcdcdc" stroke-width="0.8"/><rect x="0.5" y="0.5" width="6" height="6" fill="#000" stroke="#dcdcdc" stroke-width="1"/></svg>
<svg style="left:6px;top:352px" width="18" height="14"><rect x="1" y="1.5" width="15" height="11" fill="none" stroke="#dcdcdc" stroke-width="1.2"/><circle cx="8.5" cy="7" r="3.4" fill="none" stroke="#dcdcdc" stroke-width="1" stroke-dasharray="1.4 1"/></svg>
<svg style="left:34px;top:352px" width="20" height="16"><rect x="4" y="1.5" width="12" height="8" fill="none" stroke="#dcdcdc" stroke-width="1.2"/><rect x="1" y="4.5" width="10" height="7" fill="#535353" stroke="#dcdcdc" stroke-width="1.2"/><path d="M16.5 14 h2.2 v-2.2 Z" fill="#c0c0c0"/></svg>
<div class="a" style="left:525px;top:48px;width:16px;height:461px;background:#454545"></div>
<div class="a" style="left:320px;top:211px;width:221px;height:266.5px;background:#535353"></div>
<div class="a" style="left:320px;top:212px;width:221px;height:27px;background:#424242"></div>
<div class="a" style="left:320px;top:212px;width:37px;height:28px;background:#535353"></div>
<div class="t" style="left:329.3px;top:222.8px;font-size:9.7px;font-weight:bold;color:#f0f0f0">属性</div>
<div class="a" style="left:320px;top:211px;width:221px;height:1.6px;background:#3a3a3a"></div>
<div class="a" style="left:320px;top:211px;width:1.6px;height:266.5px;background:#444"></div>
<svg style="left:504px;top:222px" width="34" height="10"><path d="M1.5 1.5 L4.5 4.5 L1.5 7.5 M5.5 1.5 L8.5 4.5 L5.5 7.5" fill="none" stroke="#c8c8c8" stroke-width="1.1"/><path d="M15.5 0 V9" stroke="#6a6a6a" stroke-width="1"/><path d="M22.5 2 h9 M22.5 4.7 h9 M22.5 7.4 h9" stroke="#9a9a9a" stroke-width="1.3"/></svg>
<div class="a" style="left:331px;top:245px;width:19px;height:18px;background:#383838;border-radius:1px"></div>
<svg style="left:331px;top:245px" width="19" height="18"><path d="M5.5 4.5 Q9.5 6 13.5 4.5 Q12.3 9 13.5 13.5 Q9.5 12 5.5 13.5 Q6.7 9 5.5 4.5 Z" fill="none" stroke="#e8e8e8" stroke-width="1.1"/><g fill="#e8e8e8"><rect x="4" y="3" width="3" height="3"/><rect x="12" y="3" width="3" height="3"/><rect x="4" y="12" width="3" height="3"/><rect x="12" y="12" width="3" height="3"/></g></svg>
<div class="a" style="left:354px;top:249px;width:15px;height:11px;background:#e6e6e6"></div>
<div class="a" style="left:358px;top:251.5px;width:7px;height:6px;background:#3a3a3a;border-radius:50%"></div>
<div class="t" style="left:376px;top:250px;font-size:10px;color:#e6e6e6;letter-spacing:-0.3px">实时形状属性</div>
<div class="a" style="left:320px;top:268px;width:221px;height:1px;background:#454545"></div>
<div class="a" style="left:527px;top:269px;width:14px;height:202px;background:#565656"></div>
<svg style="left:326px;top:277px" width="9" height="8"><path d="M1 2 L4.5 5.5 L8 2" fill="none" stroke="#c8c8c8" stroke-width="1.1"/></svg>
<div class="t" style="left:338px;top:276px;font-size:10px;font-weight:bold;color:#ececec;letter-spacing:-0.3px">边框</div>
<div class="a" style="left:361px;top:281px;width:161px;height:1px;background:#4b4b4b"></div>
<div class="t" style="left:327px;top:297px;font-size:10px;color:#e0e0e0">W:</div>
<div class="f" style="left:344px;top:296px;width:65px;height:13px"><div class="t" style="left:2px;top:1.0px;font-size:10px;color:#dadada;letter-spacing:0.2px">346 像素</div></div>
<svg style="left:418px;top:298px" width="14" height="9"><rect x="0.7" y="1.7" width="7" height="5" rx="2.5" fill="none" stroke="#bdbdbd" stroke-width="1.1"/><rect x="5.7" y="1.7" width="7" height="5" rx="2.5" fill="none" stroke="#bdbdbd" stroke-width="1.1"/></svg>
<div class="t" style="left:440px;top:297px;font-size:10px;color:#e0e0e0">H:</div>
<div class="f" style="left:455px;top:296px;width:65px;height:13px"><div class="t" style="left:2px;top:1.0px;font-size:10px;color:#dadada;letter-spacing:0.2px">462 像素</div></div>
<div class="t" style="left:330px;top:325px;font-size:10px;color:#e0e0e0">X:</div>
<div class="f" style="left:344px;top:323px;width:65px;height:13px"><div class="t" style="left:2px;top:1.0px;font-size:10px;color:#dadada;letter-spacing:0.2px">119 像素</div></div>
<div class="t" style="left:443px;top:325px;font-size:10px;color:#e0e0e0">Y:</div>
<div class="f" style="left:455px;top:323px;width:65px;height:13px"><div class="t" style="left:2px;top:1.0px;font-size:10px;color:#dadada;letter-spacing:0.2px">180 像素</div></div>
<svg style="left:326px;top:342.5px" width="9" height="8"><path d="M1 2 L4.5 5.5 L8 2" fill="none" stroke="#c8c8c8" stroke-width="1.1"/></svg>
<div class="t" style="left:338px;top:341.5px;font-size:10px;font-weight:bold;color:#ececec;letter-spacing:-0.3px">形状细节</div>
<div class="a" style="left:381px;top:346px;width:141px;height:1px;background:#4b4b4b"></div>
<div class="a" style="left:329px;top:359px;width:22px;height:13px;background:#000;border:1px solid #3a3a3a;box-sizing:border-box"></div>
<div class="a" style="left:358px;top:359px;width:23px;height:13px;background:#fff"></div>
<svg style="left:358px;top:359px" width="23" height="13"><path d="M5 9.5 L18 3" stroke="#d03030" stroke-width="1.6"/><path d="M7 6.5 H16" stroke="#444" stroke-width="1.4"/></svg>
<div class="f" style="left:387px;top:358px;width:58px;height:15px"><div class="t" style="left:2px;top:2.8px;font-size:10px;color:#dadada;letter-spacing:0.2px">4 像素</div></div>
<div class="f" style="left:445px;top:358px;width:13px;height:15px"></div>
<svg style="left:447px;top:362px" width="10" height="8"><path d="M1.5 2 L4.5 5 L7.5 2" fill="none" stroke="#d0d0d0" stroke-width="1.2"/></svg>
<div class="f" style="left:464px;top:358px;width:56px;height:15px"></div>
<div class="a" style="left:468px;top:364.3px;width:40px;height:2.6px;background:#f4f4f4"></div>
<svg style="left:510px;top:362px" width="10" height="8"><path d="M1.5 2 L4.5 5 L7.5 2" fill="none" stroke="#d0d0d0" stroke-width="1.2"/></svg>
<div class="f" style="left:329px;top:383px;width:53px;height:15px"></div>
<svg style="left:372px;top:387px" width="10" height="8"><path d="M1.5 2 L4.5 5 L7.5 2" fill="none" stroke="#d0d0d0" stroke-width="1.2"/></svg>
<div class="f" style="left:387px;top:383px;width:56px;height:15px"></div>
<svg style="left:433px;top:387px" width="10" height="8"><path d="M1.5 2 L4.5 5 L7.5 2" fill="none" stroke="#d0d0d0" stroke-width="1.2"/></svg>
<div class="f" style="left:448px;top:383px;width:72px;height:15px"></div>
<svg style="left:510px;top:387px" width="10" height="8"><path d="M1.5 2 L4.5 5 L7.5 2" fill="none" stroke="#d0d0d0" stroke-width="1.2"/></svg>
<svg style="left:334.5px;top:384px" width="13" height="13"><rect x="0.5" y="0.5" width="12" height="12" rx="1.5" fill="#1c1c1c"/><rect x="3" y="3" width="7" height="7" rx="1.8" fill="none" stroke="#f4f4f4" stroke-width="1.7"/><g fill="#ddd"><rect x="0.8" y="0.8" width="1.4" height="1.4"/><rect x="10.8" y="0.8" width="1.4" height="1.4"/><rect x="0.8" y="10.8" width="1.4" height="1.4"/><rect x="10.8" y="10.8" width="1.4" height="1.4"/></g></svg>
<svg style="left:394px;top:384px" width="13" height="13"><path d="M4.5 1.2 H11.5 V4.2 H8.5 V8.6 H11.5 V11.6 H4.5 Z" fill="#f4f4f4"/><path d="M1.5 4.6 H7 V8.2 H1.5 Z" fill="#f4f4f4"/><circle cx="5.2" cy="6.4" r="1.4" fill="#1c1c1c"/></svg>
<svg style="left:455px;top:384px" width="13" height="13"><path d="M1 1 H12 V6 H6 V12 H1 Z" fill="#f4f4f4"/><rect x="6.6" y="6.6" width="5" height="5" fill="#1c1c1c"/></svg>
<svg style="left:326px;top:404.5px" width="9" height="8"><path d="M1 2 L4.5 5.5 L8 2" fill="none" stroke="#c8c8c8" stroke-width="1.1"/></svg>
<div class="t" style="left:338px;top:403.5px;font-size:10px;font-weight:bold;color:#ececec;letter-spacing:-0.3px">路径操作</div>
<div class="a" style="left:381px;top:408px;width:141px;height:1px;background:#4b4b4b"></div>
<div class="a" style="left:367px;top:418px;width:26.5px;height:20.5px;background:#414141;border:1px solid #3a3a3a;box-sizing:border-box"></div>
<div class="a" style="left:395.5px;top:418px;width:26.5px;height:20.5px;background:#414141;border:1px solid #3a3a3a;box-sizing:border-box"></div>
<div class="a" style="left:424.5px;top:418px;width:26.5px;height:20.5px;background:#414141;border:1px solid #3a3a3a;box-sizing:border-box"></div>
<div class="a" style="left:453.5px;top:418px;width:26.5px;height:20.5px;background:#414141;border:1px solid #3a3a3a;box-sizing:border-box"></div>
<svg style="left:372.7px;top:420.8px" width="16.5" height="15.3" viewBox="0 0 14 13"><rect x="1" y="1" width="8" height="7.5" fill="#dcdcdc"/><rect x="4.5" y="4" width="8" height="7.5" fill="#dcdcdc" stroke="#434343" stroke-width="0.6"/></svg>
<svg style="left:401.2px;top:420.8px" width="16.5" height="15.3" viewBox="0 0 14 13"><rect x="1.6" y="1.6" width="7.5" height="7" fill="none" stroke="#dcdcdc" stroke-width="1.2"/><rect x="4.5" y="4" width="8" height="7.5" fill="#dcdcdc"/></svg>
<svg style="left:430.2px;top:420.8px" width="16.5" height="15.3" viewBox="0 0 14 13"><rect x="1.6" y="1.6" width="7.5" height="7" fill="none" stroke="#dcdcdc" stroke-width="1.2"/><rect x="5" y="4.6" width="7.5" height="7" fill="none" stroke="#dcdcdc" stroke-width="1.2"/><rect x="5" y="4.6" width="4" height="4" fill="#dcdcdc"/></svg>
<svg style="left:459.2px;top:420.8px" width="16.5" height="15.3" viewBox="0 0 14 13"><rect x="1" y="1" width="8" height="7.5" fill="#dcdcdc"/><rect x="4.5" y="4" width="8" height="7.5" fill="#dcdcdc"/><rect x="5" y="4.6" width="3.6" height="3.6" fill="#434343"/></svg>
<div class="a" style="left:320px;top:470.8px;width:221px;height:1.5px;background:#434343"></div>
<div class="a" style="left:320px;top:472.3px;width:221px;height:5.2px;background:#525252"></div>
<div class="a" style="left:541px;top:22px;width:141px;height:487px;background:#3e3e3e"></div>
<div class="a" style="left:541px;top:24px;width:141px;height:10px;background:#3f3f3f"></div>
<svg style="left:563px;top:25px" width="10" height="8"><path d="M4 1 L1.5 3.5 L4 6 M7.5 1 L5 3.5 L7.5 6" fill="none" stroke="#b0b0b0" stroke-width="1"/></svg>
<div class="a" style="left:543px;top:34px;width:32px;height:475px;background:#535353"></div>
<div class="a" style="left:543px;top:69px;width:32px;height:1px;background:#454545"></div>
<div class="a" style="left:543px;top:105px;width:32px;height:1px;background:#454545"></div>
<div class="a" style="left:543px;top:141.5px;width:32px;height:1px;background:#454545"></div>
<div class="a" style="left:543px;top:177.5px;width:32px;height:1px;background:#454545"></div>
<div class="a" style="left:543px;top:213.5px;width:32px;height:1px;background:#454545"></div>
<div class="a" style="left:543px;top:249.5px;width:32px;height:1px;background:#454545"></div>
<div class="a" style="left:551px;top:37px;width:16px;height:2px;background:#5a5a5a"></div>
<div class="a" style="left:551px;top:73px;width:16px;height:2px;background:#5a5a5a"></div>
<div class="a" style="left:551px;top:109px;width:16px;height:2px;background:#5a5a5a"></div>
<div class="a" style="left:551px;top:145.5px;width:16px;height:2px;background:#5a5a5a"></div>
<div class="a" style="left:551px;top:181.5px;width:16px;height:2px;background:#5a5a5a"></div>
<div class="a" style="left:551px;top:217.5px;width:16px;height:2px;background:#5a5a5a"></div>
<svg style="left:549.5px;top:44px" width="22" height="22" viewBox="0 0 24 24"><path d="M3.5 8 H7.5 C6 5.5 7.5 3.5 9.5 3.5 C11.5 3.5 13 5.5 11.5 8 H15.5 V11.5 C18 10.3 19.5 11.8 19.5 13.3 C19.5 14.8 18 16.3 15.5 15 V19 H3.5 V15.5 C5.5 16.5 7 15.3 7 13.5 C7 11.8 5.5 10.8 3.5 11.8 Z" fill="none" stroke="#e4e4e4" stroke-width="1.4" stroke-linejoin="round"/></svg>
<svg style="left:552px;top:83px" width="18" height="18"><path d="M2 2 L14.8 8 L2 14 Z" fill="#e4e4e4"/></svg>
<svg style="left:550px;top:116px" width="22" height="22"><path d="M6 1.5 V15.5 H20 M1.5 6 H15.5 V20" fill="none" stroke="#e4e4e4" stroke-width="1.5"/><text x="8.3" y="13.3" font-size="6.5" font-weight="bold" fill="#e4e4e4" font-family="Liberation Sans, sans-serif">C</text></svg>
<svg style="left:551px;top:152px" width="20" height="22"><path d="M4.8 17.5 C5.5 14 5 12 5.5 9 C6 3.5 14 3.5 14.5 9 C15 12 14.5 14 15.2 17.5 L13 16.3 L11.5 17.8 L10 16.3 L8.5 17.8 L7 16.3 Z" fill="#e4e4e4"/><circle cx="10" cy="9.8" r="2.6" fill="#535353"/><circle cx="10" cy="9.8" r="1.1" fill="#e4e4e4"/><path d="M7 5 L6 3.2 M13 5 L14 3.2" stroke="#e4e4e4" stroke-width="1"/></svg>
<div class="t" style="left:553.5px;top:190.5px;font-size:15.5px;color:#e4e4e4">A</div>
<div class="a" style="left:564.8px;top:191px;width:1.2px;height:15px;background:#e4e4e4"></div>
<div class="a" style="left:548px;top:224px;width:22px;height:18.5px;background:#2c2c2c;border-radius:1px"></div>
<svg style="left:548px;top:224px" width="22" height="19"><path d="M9 2.5 L12.6 4.3 V8.6 L9 10.4 L5.4 8.6 V4.3 Z M5.4 4.3 L9 6.1 L12.6 4.3 M9 6.1 V10.4" fill="none" stroke="#e4e4e4" stroke-width="1"/><rect x="15.3" y="2.5" width="3.2" height="8" fill="#e4e4e4"/><rect x="16" y="5.3" width="1.8" height="1.5" fill="#2c2c2c"/><rect x="5" y="13" width="13.5" height="3.2" fill="#e4e4e4"/><path d="M7.5 13.5 v2.2 M10 13.5 v2.2 M12.5 13.5 v2.2 M15 13.5 v2.2" stroke="#2c2c2c" stroke-width="0.6"/></svg>
<div class="a" style="left:552px;top:245px;width:14px;height:2px;background:#5e5e5e"></div>
<div class="a" style="left:578px;top:34px;width:104px;height:174px;background:#535353"></div>
<div class="a" style="left:578px;top:34px;width:104px;height:24px;background:#424242"></div>
<div class="a" style="left:578px;top:34px;width:35px;height:25px;background:#535353"></div>
<div class="a" style="left:613px;top:34px;width:36px;height:24px;background:#484848"></div>
<div class="t" style="left:585.5px;top:42px;font-size:9.5px;font-weight:bold;color:#f2f2f2">颜色</div>
<div class="t" style="left:621px;top:42px;font-size:9.5px;color:#c4c4c4">色板</div>
<div class="a" style="left:595px;top:80px;width:16px;height:16px;background:#fff"></div>
<div class="a" style="left:585.3px;top:70.2px;width:17.2px;height:17.2px;background:#000;border:1px solid #d8d8d8;box-sizing:border-box;box-shadow:0 0 0 1px #535353, inset 0 0 0 1px #444"></div>
<div class="t" style="left:617.5px;top:76.5px;font-size:10px;color:#e6e6e6">H</div>
<div class="t" style="left:617.5px;top:95.5px;font-size:10px;color:#e6e6e6">S</div>
<div class="t" style="left:617.5px;top:115px;font-size:10px;color:#e6e6e6">B</div>
<div class="a" style="left:630px;top:73px;width:52px;height:7px;background:linear-gradient(90deg,#ff2a00 0%,#ffb000 14%,#f0f000 26%,#40e000 42%,#00d860 58%,#00d0d0 74%,#00a0ff 90%,#0078ff 100%)"></div>
<div class="a" style="left:630px;top:93px;width:52px;height:6px;background:#000"></div>
<div class="a" style="left:630px;top:113px;width:52px;height:6px;background:linear-gradient(90deg,#000 0%,#9a9a9a 100%)"></div>
<svg style="left:625.8px;top:80.3px" width="11" height="9"><path d="M5.4 0.2 L10.2 6 Q10.6 8 8.8 8 H2 Q0.2 8 0.6 6 Z" fill="#f6f6f6"/></svg>
<svg style="left:625.8px;top:99.6px" width="11" height="9"><path d="M5.4 0.2 L10.2 6 Q10.6 8 8.8 8 H2 Q0.2 8 0.6 6 Z" fill="#f6f6f6"/></svg>
<svg style="left:625.8px;top:119.2px" width="11" height="9"><path d="M5.4 0.2 L10.2 6 Q10.6 8 8.8 8 H2 Q0.2 8 0.6 6 Z" fill="#f6f6f6"/></svg>
<div class="a" style="left:584px;top:142px;width:98px;height:59px;background:linear-gradient(90deg,#f01800 0%,#ff8000 12%,#fff000 29%,#a0d800 40%,#00a828 56%,#009c60 68%,#0098b0 80%,#0090e8 93%,#0084f0 100%)"></div>
<div class="a" style="left:584px;top:142px;width:98px;height:59px;background:linear-gradient(180deg,rgba(255,255,255,1) 0%,rgba(255,255,255,0.75) 12%,rgba(255,255,255,0) 46%,rgba(0,0,0,0) 52%,rgba(0,0,0,1) 100%)"></div>
<div class="a" style="left:578px;top:208px;width:104px;height:3px;background:#3e3e3e"></div>
<div class="a" style="left:578px;top:211px;width:104px;height:298px;background:#535353"></div>
<div class="a" style="left:578px;top:211px;width:104px;height:25px;background:#424242"></div>
<div class="a" style="left:578px;top:211px;width:35px;height:26px;background:#535353"></div>
<div class="a" style="left:613px;top:211px;width:35px;height:25px;background:#484848"></div>
<div class="a" style="left:649px;top:211px;width:33px;height:25px;background:#484848"></div>
<div class="t" style="left:585.5px;top:219px;font-size:9.5px;font-weight:bold;color:#f2f2f2">图层</div>
<div class="t" style="left:620.5px;top:219px;font-size:9.5px;color:#c4c4c4">通道</div>
<div class="t" style="left:656.5px;top:219px;font-size:9.5px;color:#c4c4c4">路径</div>
<div class="f" style="left:582px;top:244px;width:64px;height:15px"></div>
<svg style="left:587px;top:246px" width="10" height="11"><circle cx="5.5" cy="4" r="2.8" fill="none" stroke="#e8e8e8" stroke-width="1.2"/><path d="M3.6 6 L1 9.5" stroke="#e8e8e8" stroke-width="1.3"/></svg>
<div class="t" style="left:599px;top:246.5px;font-size:10px;font-weight:bold;color:#ececec">类型</div>
<svg style="left:635px;top:248px" width="10" height="8"><path d="M1.5 2 L4.5 5 L7.5 2" fill="none" stroke="#d8d8d8" stroke-width="1.3"/></svg>
<svg style="left:659px;top:247px" width="12" height="10"><rect x="0.6" y="0.6" width="10.4" height="7.8" rx="0.8" fill="none" stroke="#e0e0e0" stroke-width="1.1"/><path d="M2.3 6.8 L4.5 3.8 L6 5.6 L7 4.6 L9 6.8 Z" fill="#e0e0e0"/></svg>
<div class="a" style="left:578px;top:262.5px;width:104px;height:1px;background:#484848"></div>
<div class="a" style="left:578px;top:287.5px;width:104px;height:1px;background:#484848"></div>
<div class="a" style="left:680px;top:247px;width:2px;height:9px;background:#e0e0e0;border-radius:2px 0 0 2px"></div>
<div class="f" style="left:582px;top:268px;width:97px;height:16px"></div>
<div class="t" style="left:587px;top:271px;font-size:10px;font-weight:bold;color:#ececec">正常</div>
<svg style="left:668px;top:273px" width="10" height="8"><path d="M1.5 2 L4.5 5 L7.5 2" fill="none" stroke="#d8d8d8" stroke-width="1.3"/></svg>
<div class="t" style="left:583px;top:296px;font-size:10px;color:#dcdcdc">锁定:</div>
<svg style="left:610.2px;top:295.6px" width="10" height="10"><rect x="0.5" y="0.5" width="9" height="9" fill="#5e5e5e" stroke="#b8b8b8" stroke-width="0.8"/><path d="M0.5 0.5 h3 v3 h-3 Z M6.5 0.5 h3 v3 h-3 Z M3.5 3.5 h3 v3 h-3 Z M0.5 6.5 h3 v3 h-3 Z M6.5 6.5 h3 v3 h-3 Z" fill="#b0b0b0"/></svg>
<svg style="left:630px;top:294px" width="12" height="14"><path d="M10 1.2 L5 8" stroke="#bcbcbc" stroke-width="2.3" stroke-linecap="round"/><path d="M5.3 7.2 L3 12.5 L1.3 11.8 L3.6 6.6 Z" stroke="#bcbcbc" stroke-width="1" fill="#bcbcbc"/></svg>
<svg style="left:647px;top:294px" width="14" height="14" viewBox="-7 -7 14 14"><path d="M0 -6.5 L2.4 -3.6 H0.7 V-0.7 H3.6 V-2.4 L6.5 0 L3.6 2.4 V0.7 H0.7 V3.6 H2.4 L0 6.5 L-2.4 3.6 H-0.7 V0.7 H-3.6 V2.4 L-6.5 0 L-3.6 -2.4 V-0.7 H-0.7 V-3.6 H-2.4 Z" fill="#dcdcdc"/></svg>
<svg style="left:667px;top:295px" width="14" height="12"><path d="M1 2.5 H10 M1.5 2.5 V10 H11 V5" fill="none" stroke="#dcdcdc" stroke-width="1.2"/><path d="M8.5 0.5 L12.5 4.5 L8.5 4.5 Z" fill="#dcdcdc"/></svg>
<div class="a" style="left:578px;top:312px;width:104px;height:1px;background:#464646"></div>
<div class="a" style="left:603px;top:313.5px;width:79px;height:30px;background:#626262"></div>
<div class="a" style="left:578px;top:344px;width:104px;height:1px;background:#464646"></div>
<div class="a" style="left:578px;top:373px;width:104px;height:1px;background:#464646"></div>
<div class="a" style="left:602px;top:313px;width:1px;height:60px;background:#4a4a4a"></div>
<svg style="left:584.5px;top:325.5px" width="12" height="9"><path d="M0.5 4.5 Q6 -2.5 11.5 4.5 Q6 11.5 0.5 4.5 Z" fill="#e8e8e8"/><circle cx="6" cy="4.5" r="2.3" fill="#535353"/><circle cx="6" cy="4.5" r="1" fill="#e8e8e8"/></svg>
<svg style="left:584.5px;top:354.5px" width="12" height="9"><path d="M0.5 4.5 Q6 -2.5 11.5 4.5 Q6 11.5 0.5 4.5 Z" fill="#e8e8e8"/><circle cx="6" cy="4.5" r="2.3" fill="#535353"/><circle cx="6" cy="4.5" r="1" fill="#e8e8e8"/></svg>
<svg style="left:605px;top:315px" width="33" height="28"><defs><pattern id="ck" width="4" height="4" patternUnits="userSpaceOnUse"><rect width="4" height="4" fill="#fff"/><rect width="2" height="2" fill="#ccc"/><rect x="2" y="2" width="2" height="2" fill="#ccc"/></pattern></defs><rect x="0.5" y="0.5" width="32" height="27" fill="#686868" stroke="#f4f4f4" stroke-width="1" stroke-dasharray="7 3"/><rect x="2.5" y="2.5" width="28" height="23" fill="url(#ck)"/><ellipse cx="9.8" cy="13.5" rx="3.9" ry="5" fill="#000"/><rect x="18.5" y="13.5" width="12" height="12" fill="#d8d8d8" stroke="#333" stroke-width="1"/><rect x="21.5" y="16.5" width="6" height="6" fill="none" stroke="#333" stroke-width="1"/><g fill="#333"><rect x="20.3" y="15.3" width="2.4" height="2.4"/><rect x="26.3" y="15.3" width="2.4" height="2.4"/><rect x="20.3" y="21.3" width="2.4" height="2.4"/><rect x="26.3" y="21.3" width="2.4" height="2.4"/></g></svg>
<div class="t" style="left:643px;top:326px;font-size:9.5px;color:#f0f0f0">椭圆 1</div>
<div class="a" style="left:608px;top:349px;width:27px;height:20px;background:#fff;box-shadow:0 0 0 1px #3c3c3c"></div>
<div class="t" style="left:643px;top:355px;font-size:9.5px;color:#e6e6e6">背景</div>
<svg style="left:502.5px;top:419.2px" width="168" height="69"><path style="filter:drop-shadow(0 0 1.6px rgba(255,255,255,0.4))" d="M19.5 0.6 L147 0.2 L167.3 10 L167.3 56.8 L154 68.8 L15 68.4 Q1.5 65 0.2 57.5 L0.2 13.5 Q3 3.5 19.5 0.6 Z" fill="#fff"/><path d="M 56.5 40.9 A 24.2 24.2 0 1 0 40.5 56.9" fill="none" stroke="#2d7cf3" stroke-width="7.6" stroke-linecap="round"/><circle cx="32.8" cy="33" r="10.6" fill="none" stroke="#f7a732" stroke-width="6.6"/><path d="M40.2 40.4 L48.4 48.6" stroke="#f7a732" stroke-width="7" stroke-linecap="round"/></svg>
<div class="t" style="left:563.3px;top:425.9px;font-family:'Noto Serif CJK SC','Liberation Serif',serif;font-weight:600;font-size:45.5px;color:#0a0a0a;transform:scaleX(0.77);transform-origin:0 0;width:138px;height:48px;overflow:hidden">查询啦</div>
<div class="t" style="left:567.3px;top:471.6px;font-family:'Liberation Sans',sans-serif;font-size:14.6px;color:#111;-webkit-text-stroke:0.35px #111">chaxunla.com</div>
</div></body></html>
